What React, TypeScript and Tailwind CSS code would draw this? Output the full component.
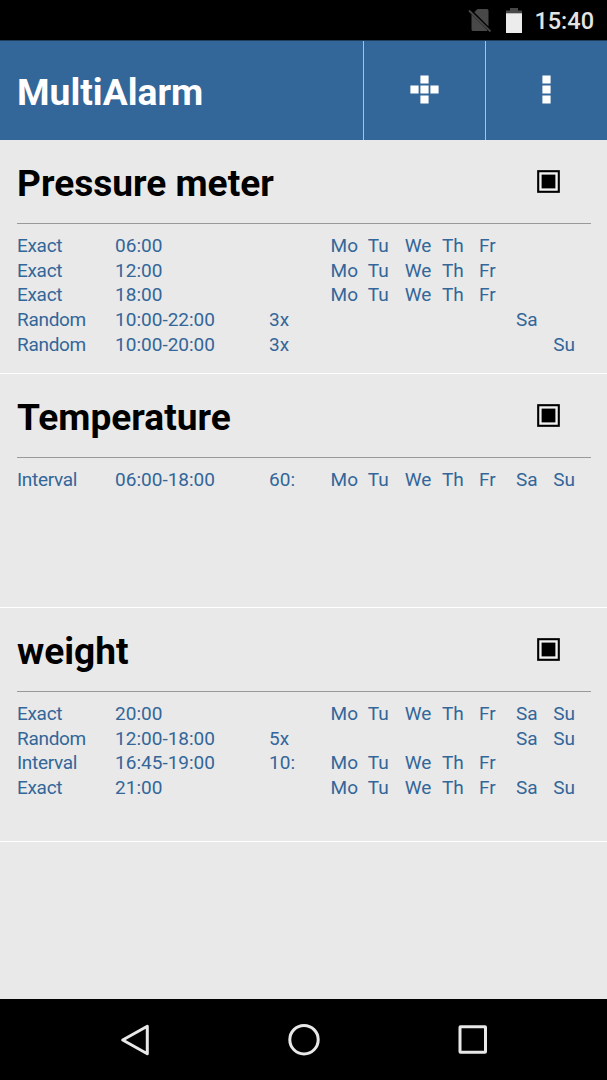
import React from "react";

const DAYS = ["Mo", "Tu", "We", "Th", "Fr", "Sa", "Su"];
const WORKDAYS = ["Mo", "Tu", "We", "Th", "Fr"];

type Rule = { type: string; time: string; repeat?: string; days: string[] };
type Alarm = { title: string; rules: Rule[] };

const alarms: Alarm[] = [
  {
    title: "Pressure meter",
    rules: [
      { type: "Exact", time: "06:00", days: WORKDAYS },
      { type: "Exact", time: "12:00", days: WORKDAYS },
      { type: "Exact", time: "18:00", days: WORKDAYS },
      { type: "Random", time: "10:00-22:00", repeat: "3x", days: ["Sa"] },
      { type: "Random", time: "10:00-20:00", repeat: "3x", days: ["Su"] },
    ],
  },
  {
    title: "Temperature",
    rules: [{ type: "Interval", time: "06:00-18:00", repeat: "60:", days: DAYS }],
  },
  {
    title: "weight",
    rules: [
      { type: "Exact", time: "20:00", days: DAYS },
      { type: "Random", time: "12:00-18:00", repeat: "5x", days: ["Sa", "Su"] },
      { type: "Interval", time: "16:45-19:00", repeat: "10:", days: WORKDAYS },
      { type: "Exact", time: "21:00", days: DAYS },
    ],
  },
];

const StatusBar = () => (
  <div className="flex h-10 items-center justify-end bg-black pr-[13px]">
    <svg className="mr-[14px] h-6 w-6" viewBox="0 0 24 24">
      <path
        d="M9.5 1H19a1.5 1.5 0 0 1 1.5 1.5V18.5L6.3 4.2zM3.5 6.3 19.5 22.3 18.8 23H5a1.5 1.5 0 0 1-1.5-1.5z"
        fill="#484848"
      />
      <path d="M1 2.5 22.5 23.5" stroke="#484848" strokeWidth="1.8" />
    </svg>
    <svg className="mr-3 h-[25px] w-4" viewBox="0 0 16 25">
      <path d="M0 2.5h4V0h8v2.5h4V6H0z" fill="#484848" />
      <path d="M0 5.3h16V25H0z" fill="#ececec" />
    </svg>
    <span className="pt-0.5 text-[23.5px] leading-[38px] font-medium text-[#e4e4e4]">15:40</span>
  </div>
);

const Header = () => (
  <div className="flex h-[100px] border-t border-[#1f3f5e] bg-[#336699] text-white">
    <h1 className="flex-1 pt-px pl-[17px] text-[37.2px] leading-[100px] font-bold">MultiAlarm</h1>
    <button className="flex w-[122px] items-center justify-center border-l border-[#adc2d6] pb-[2px]">
      <svg className="h-[29px] w-[29px]" viewBox="0 0 29 29" fill="currentColor">
        <path d="M10.4 .4h8.2v8.2h-8.2zM.4 10.4h8.2v8.2H.4zM10.4 10.4h8.2v8.2h-8.2zM20.4 10.4h8.2v8.2h-8.2zM10.4 20.4h8.2v8.2h-8.2z" />
      </svg>
    </button>
    <button className="flex w-[122px] items-center justify-center border-l border-[#adc2d6] pb-[2px]">
      <svg className="h-[29px] w-[9px]" viewBox="0 0 9 29" fill="currentColor">
        <path d="M.4 .4h8.2v8.2H.4zM.4 10.4h8.2v8.2H.4zM.4 20.4h8.2v8.2H.4z" />
      </svg>
    </button>
  </div>
);

const AlarmCard = ({ alarm }: { alarm: Alarm }) => (
  <div className="h-[234px] border-b border-white pr-4 pl-[17px]">
    <div className="flex h-[84px] items-center justify-between border-b border-[#999] pr-[31px]">
      <h2 className="pt-[5px] text-[37.1px] leading-none font-bold text-black">{alarm.title}</h2>
      <svg className="h-[23px] w-[23px]" viewBox="0 0 23 23">
        <rect x="1.2" y="1.2" width="20.6" height="20.6" fill="#f2f2f2" stroke="#000" strokeWidth="2.1" />
        <rect x="4.6" y="4.6" width="13.8" height="13.8" fill="#000" />
      </svg>
    </div>
    <div className="pt-[9.8px] text-[19px] text-[#336699]">
      {alarm.rules.map((rule, index) => (
        <div
          key={index}
          className="grid h-[24.75px] grid-cols-[98.1px_154px_61.5px_repeat(7,37.1px)] leading-[24.75px] whitespace-nowrap"
        >
          <span className="tracking-[-0.3px]">{rule.type}</span>
          <span>{rule.time}</span>
          <span>{rule.repeat}</span>
          {DAYS.map((day) => (
            <span key={day}>{rule.days.includes(day) ? day : ""}</span>
          ))}
        </div>
      ))}
    </div>
  </div>
);

const NavBar = () => (
  <div className="flex h-[81px] items-center justify-between bg-black pr-[119px] pl-[120px]">
    <svg className="h-8 w-[30px]" viewBox="0 0 30 32" fill="none" stroke="#e8e8e8" strokeWidth="3">
      <path d="M27.3 2.2v27.6L2.7 16z" strokeLinejoin="round" />
    </svg>
    <svg className="h-8 w-8" viewBox="0 0 32 32" fill="none" stroke="#e8e8e8" strokeWidth="3">
      <circle cx="16" cy="15.7" r="14.2" />
    </svg>
    <svg className="h-[30px] w-[30px]" viewBox="0 0 30 30" fill="none" stroke="#e8e8e8" strokeWidth="3">
      <rect x="2" y="1.7" width="25.5" height="25.5" rx="0.5" />
    </svg>
  </div>
);

const App = () => {
  return (
    <div className="flex h-[1080px] w-[607px] flex-col overflow-hidden bg-[#e9e9e9] font-['Roboto',sans-serif]">
      <StatusBar />
      <Header />
      {/* Alarm list */}
      <div className="flex-1">
        {alarms.map((alarm) => (
          <AlarmCard key={alarm.title} alarm={alarm} />
        ))}
      </div>
      <NavBar />
    </div>
  );
};

export default App;
